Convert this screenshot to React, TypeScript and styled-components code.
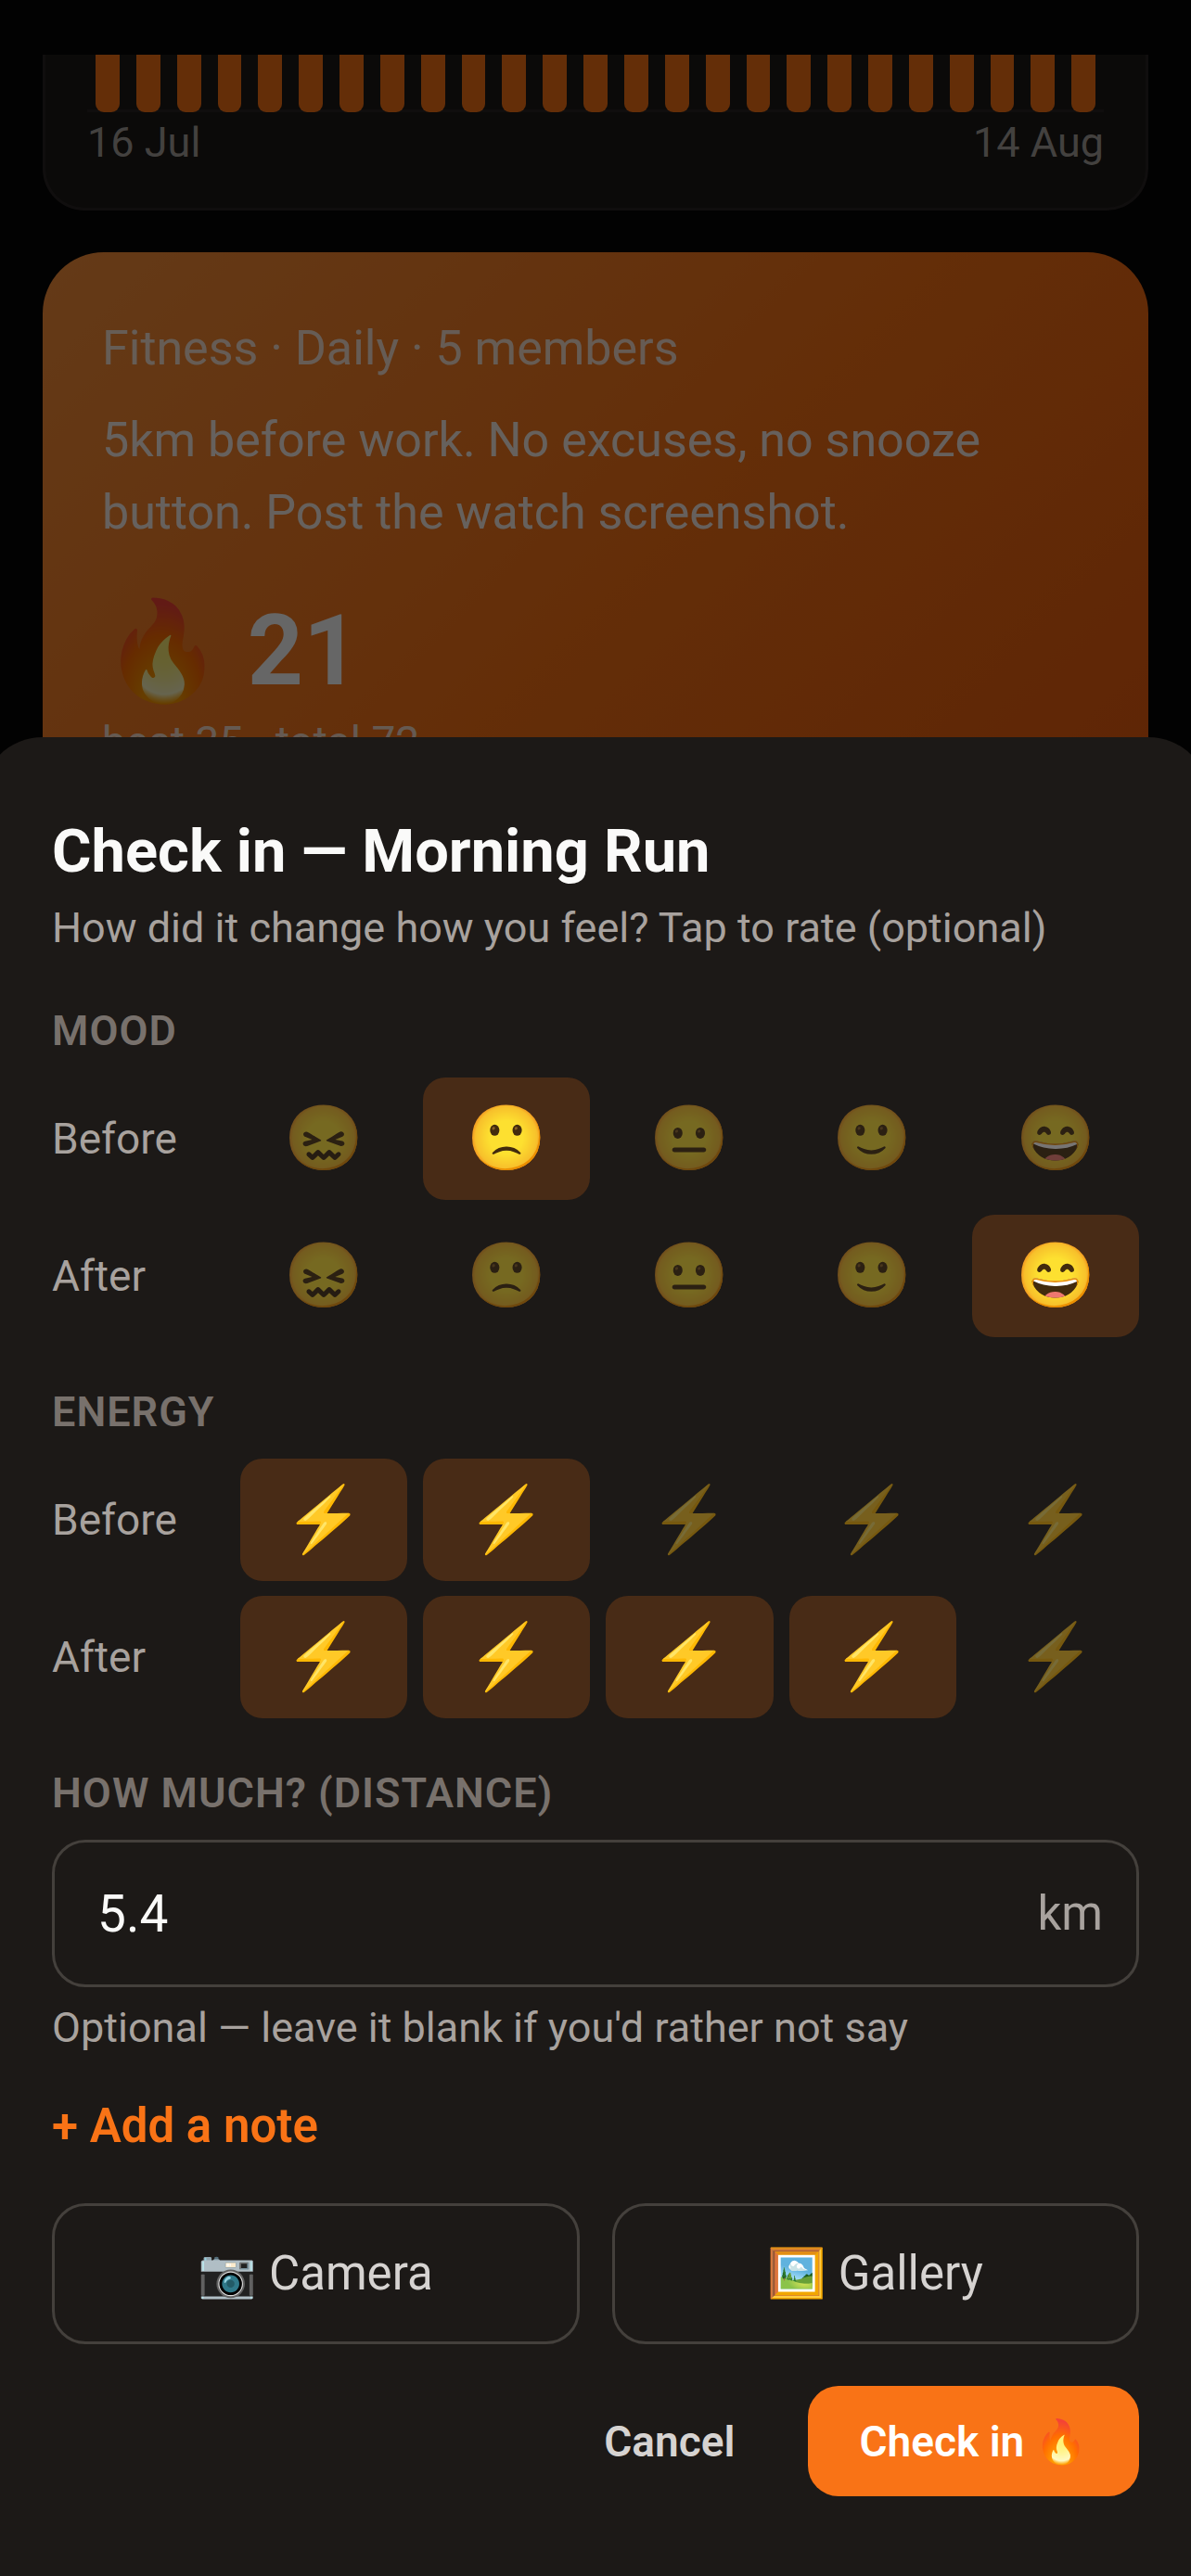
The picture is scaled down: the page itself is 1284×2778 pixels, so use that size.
import React, { useState } from 'react';
import styled, { createGlobalStyle } from 'styled-components';

const GlobalStyle = createGlobalStyle`
  * { box-sizing: border-box; }
  body {
    margin: 0;
    background: #070606;
    color: #fafaf9;
    font-family: Roboto, "Noto Color Emoji", sans-serif;
  }
  button, input { font: inherit; color: inherit; border: 0; background: none; padding: 0; margin: 0; }
  button { cursor: pointer; }
  h2, h3, p { margin: 0; }
`;

const Page = styled.div`
  height: 100vh;
  overflow: hidden;
`;

const Feed = styled.main`
  display: flex;
  flex-direction: column;
  gap: 45px;
  padding: 59px 46px 0;
`;

const ChartCard = styled.section`
  padding: 0 45px 43px;
  background: #1c1917;
  border: 3px solid #292524;
  border-top: 0;
  border-radius: 0 0 45px 45px;
`;

const Bars = styled.div`
  display: flex;
  height: 62px;
  background: linear-gradient(#292524, #292524) bottom / 100% 3px no-repeat;
`;

const Bar = styled.div`
  flex: 1;
  padding: 0 9px;
  &::before {
    content: '';
    display: block;
    height: 100%;
    background: #f97316;
    border-radius: 0 0 9px 9px;
  }
`;

const ChartRange = styled.div`
  display: flex;
  justify-content: space-between;
  margin-top: 6px;
  font-size: 45px;
  line-height: 54px;
  color: #a8a29e;
`;

const HabitCard = styled.section`
  padding: 65px 64px 200px;
  border-radius: 66px;
  background: linear-gradient(135deg, #fb923c, #f97316 50%, #ea580c);
`;

const HabitMeta = styled.p`
  font-size: 52px;
  line-height: 78px;
  color: rgba(255, 255, 255, 0.8);
`;

const HabitText = styled.p`
  margin-top: 21px;
  font-size: 52px;
  line-height: 78px;
  color: rgba(255, 255, 255, 0.9);
`;

const Streak = styled.div`
  margin-top: 48px;
  font-size: 105px;
  line-height: 126px;
  font-weight: 700;
  color: #fff;
`;

const StreakMeta = styled.p`
  margin-top: 4px;
  font-size: 46px;
  line-height: 60px;
  color: rgba(255, 255, 255, 0.8);
`;

const Scrim = styled.div`
  position: fixed;
  inset: 0;
  display: flex;
  flex-direction: column;
  justify-content: flex-end;
  overflow: hidden;
  background: rgba(0, 0, 0, 0.6);
`;

const Sheet = styled.form`
  margin: 0 -20px;
  padding: 84px 76px 86px;
  background: #1c1917;
  border-radius: 66px 66px 0 0;
`;

const Title = styled.h2`
  font-size: 65px;
  line-height: 78px;
  font-weight: 700;
`;

const Hint = styled.p`
  margin-top: 14px;
  font-size: 45px;
  line-height: 60px;
  color: #a8a29e;
`;

const Group = styled.section`
  margin-top: 54px;
`;

const GroupLabel = styled.h3`
  display: block;
  margin-bottom: 23px;
  font-size: 45px;
  line-height: 54px;
  font-weight: 600;
  letter-spacing: 1px;
  text-transform: uppercase;
  color: #78716c;
`;

const Scale = styled.div`
  display: flex;
  align-items: center;
  gap: 17px;
  & + & { margin-top: 16px; }
`;

const ScaleLabel = styled.span`
  flex: 0 0 186px;
  font-size: 46px;
  line-height: 54px;
  color: #a8a29e;
`;

const Tile = styled.button<{ $on: boolean }>`
  flex: 1;
  height: 132px;
  border-radius: 24px;
  font-size: 69px;
  line-height: 78px;
  background: ${(p) => (p.$on ? 'rgba(249, 115, 22, 0.2)' : 'transparent')};
  & > span { opacity: ${(p) => (p.$on ? 1 : 0.4)}; }
`;

const Field = styled.div`
  display: flex;
  align-items: center;
  height: 159px;
  padding: 0 36px 0 46px;
  border: 3px solid #44403c;
  border-radius: 36px;
`;

const AmountInput = styled.input`
  flex: 1;
  min-width: 0;
  font-size: 55px;
  line-height: 66px;
  outline: none;
`;

const Unit = styled.span`
  font-size: 51px;
  line-height: 66px;
  color: #a8a29e;
`;

const AddNote = styled.button`
  display: block;
  margin-top: 43px;
  font-size: 51px;
  line-height: 66px;
  font-weight: 600;
  color: #f97316;
`;

const Attachments = styled.div`
  display: grid;
  grid-template-columns: 1fr 1fr;
  gap: 35px;
  margin-top: 50px;
`;

const AttachButton = styled.button`
  height: 152px;
  border: 3px solid #44403c;
  border-radius: 36px;
  font-size: 51px;
  line-height: 66px;
  color: #d6d3d1;
`;

const Actions = styled.div`
  display: flex;
  justify-content: flex-end;
  gap: 24px;
  margin-top: 45px;
`;

const ActionButton = styled.button<{ $primary?: boolean }>`
  height: 119px;
  padding: 0 55px;
  border-radius: 33px;
  font-size: 46px;
  line-height: 60px;
  font-weight: 600;
  color: ${(p) => (p.$primary ? '#fff' : '#d6d3d1')};
  background: ${(p) => (p.$primary ? '#f97316' : 'transparent')};
`;

const MOODS = ['😖', '🙁', '😐', '🙂', '😄'];
const BOLTS = ['⚡', '⚡', '⚡', '⚡', '⚡'];

function Rating({ label, icons, initial, fill = false }: { label: string; icons: string[]; initial: number; fill?: boolean }) {
  const [value, setValue] = useState(initial);
  return (
    <Scale role="group" aria-label={label}>
      <ScaleLabel>{label}</ScaleLabel>
      {icons.map((icon, i) => {
        const on = fill ? i < value : i + 1 === value;
        return (
          <Tile key={i} type="button" $on={on} aria-pressed={on} onClick={() => setValue(i + 1)}>
            <span>{icon}</span>
          </Tile>
        );
      })}
    </Scale>
  );
}

export default function App() {
  const [amount, setAmount] = useState('5.4');
  return (
    <Page>
      <GlobalStyle />
      <Feed>
        <ChartCard>
          <Bars>
            {Array.from({ length: 25 }, (_, i) => (
              <Bar key={i} />
            ))}
          </Bars>
          <ChartRange>
            <span>16 Jul</span>
            <span>14 Aug</span>
          </ChartRange>
        </ChartCard>
        <HabitCard>
          <HabitMeta>Fitness · Daily · 5 members</HabitMeta>
          <HabitText>5km before work. No excuses, no snooze button. Post the watch screenshot.</HabitText>
          <Streak>🔥 21</Streak>
          <StreakMeta>best 35 · total 72</StreakMeta>
        </HabitCard>
      </Feed>
      <Scrim>
        <Sheet onSubmit={(e) => e.preventDefault()}>
          <Title>Check in — Morning Run</Title>
          <Hint>How did it change how you feel? Tap to rate (optional)</Hint>
          <Group>
            <GroupLabel>Mood</GroupLabel>
            <Rating label="Before" icons={MOODS} initial={2} />
            <Rating label="After" icons={MOODS} initial={5} />
          </Group>
          <Group>
            <GroupLabel>Energy</GroupLabel>
            <Rating label="Before" icons={BOLTS} initial={2} fill />
            <Rating label="After" icons={BOLTS} initial={4} fill />
          </Group>
          <Group>
            <GroupLabel as="label" htmlFor="amount">How much? (distance)</GroupLabel>
            <Field>
              <AmountInput id="amount" inputMode="decimal" value={amount} onChange={(e) => setAmount(e.target.value)} />
              <Unit>km</Unit>
            </Field>
            <Hint>Optional — leave it blank if you'd rather not say</Hint>
          </Group>
          <AddNote type="button">+ Add a note</AddNote>
          <Attachments>
            <AttachButton type="button">📷 Camera</AttachButton>
            <AttachButton type="button">🖼️ Gallery</AttachButton>
          </Attachments>
          <Actions>
            <ActionButton type="button">Cancel</ActionButton>
            <ActionButton type="submit" $primary>Check in 🔥</ActionButton>
          </Actions>
        </Sheet>
      </Scrim>
    </Page>
  );
}
